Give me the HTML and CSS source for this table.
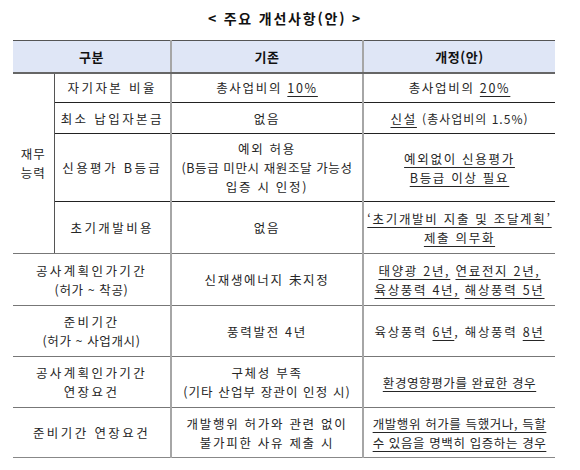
FILE: index.html
```html
<!DOCTYPE html>
<html lang="ko">
<head>
<meta charset="utf-8">
<link rel="stylesheet" href="styles.css">
</head>
<body>
<div class="page">
  <div class="title">&lt; 주요 개선사항(안) &gt;</div>
  <table class="tbl">
    <colgroup>
      <col class="c1"><col class="c2"><col class="c3"><col class="c4">
    </colgroup>
    <thead>
      <tr class="rh">
        <th colspan="2" class="b-mid">구분</th>
        <th class="b-mid">기존</th>
        <th>개정(안)</th>
      </tr>
    </thead>
    <tbody>
      <tr class="r1">
        <td rowspan="4" class="grp">재무<br>능력</td>
        <td class="b-mid lab">자기자본 비율</td>
        <td class="b-mid">총사업비의 <u>10%</u></td>
        <td>총사업비의 <u>20%</u></td>
      </tr>
      <tr class="r2">
        <td class="b-mid lab">최소 납입자본금</td>
        <td class="b-mid">없음</td>
        <td><u>신설</u> <span class="small">(총사업비의 1.5%)</span></td>
      </tr>
      <tr class="r3">
        <td class="b-mid lab">신용평가 B등급</td>
        <td class="b-mid">예외 허용<br><span class="tight">(B등급 미만시 재원조달 가능성</span><br>입증 시 인정)</td>
        <td><u>예외없이 신용평가</u><br><u>B등급 이상 필요</u></td>
      </tr>
      <tr class="r4">
        <td class="b-mid lab">초기개발비용</td>
        <td class="b-mid">없음</td>
        <td><u>‘초기개발비 지출 및 조달계획’</u><br><u>제출 의무화</u></td>
      </tr>
      <tr class="r5 sep">
        <td colspan="2" class="b-mid lab">공사계획인가기간<br><span class="sub">(허가 ~ 착공)</span></td>
        <td class="b-mid">신재생에너지 未지정</td>
        <td><u>태양광 2년,</u> <u>연료전지 2년,</u><br><u>육상풍력 4년,</u> <u>해상풍력 5년</u></td>
      </tr>
      <tr class="r6 sep">
        <td colspan="2" class="b-mid lab">준비기간<br><span class="sub">(허가 ~ 사업개시)</span></td>
        <td class="b-mid">풍력발전 4년</td>
        <td>육상풍력 <u>6년</u>, 해상풍력 <u>8년</u></td>
      </tr>
      <tr class="r7 sep">
        <td colspan="2" class="b-mid lab">공사계획인가기간<br>연장요건</td>
        <td class="b-mid">구체성 부족<br><span class="mid">(기타 산업부 장관이 인정 시)</span></td>
        <td class="tight"><u>환경영향평가를 완료한 경우</u></td>
      </tr>
      <tr class="r8 sep last">
        <td colspan="2" class="b-mid lab">준비기간 연장요건</td>
        <td class="b-mid">개발행위 허가와 관련 없이<br>불가피한 사유 제출 시</td>
        <td class="tight"><u>개발행위 허가를 득했거나, 득할</u><br><u>수 있음을 명백히 입증하는 경우</u></td>
      </tr>
    </tbody>
  </table>
</div>
</body>
</html>
```

FILE: styles.css
```css
html, body {
  margin: 0;
  padding: 0;
  background: #ffffff;
}
.page {
  width: 580px;
  height: 470px;
  font-family: "Noto Sans CJK KR", "Noto Sans", sans-serif;
  color: #262626;
}
.title {
  height: 40px;
  line-height: 37px;
  text-align: center;
  font-size: 14px;
  font-weight: bold;
  letter-spacing: 1.8px;
  padding-right: 10px;
  color: #111;
}
.tbl {
  margin-left: 13px;
  width: 542px;
  table-layout: fixed;
  border-collapse: collapse;
  font-size: 12.5px;
  letter-spacing: 1.7px;
}
.c1 { width: 41px; }
.c2 { width: 117px; }
.c3 { width: 192px; }
.c4 { width: 192px; }
.tbl th, .tbl td {
  padding: 0;
  text-align: center;
  vertical-align: middle;
  line-height: 19px;
  white-space: nowrap;
}
.tbl thead th {
  background: #dfe6f6;
  font-weight: bold;
  font-size: 13px;
  letter-spacing: 0.6px;
  border-top: 1.5px solid #555;
  border-bottom: 2px solid #666;
  color: #111;
}
.rh { height: 32px; }
.b-mid { border-right: 2px solid #a6a6a6; }
.lab { letter-spacing: 2.4px; }
.sub { letter-spacing: 0.6px; }
.grp {
  border-right: 1px solid #555;
  line-height: 20px;
  letter-spacing: 1px;
}
.r1 td:not(.grp), .r2 td, .r3 td { border-bottom: 1px solid #222; }
.r4 td { border-bottom: 1px solid #777; }
.r1 td.grp { border-bottom: 1px solid #777; }
.sep td { border-bottom: 1px solid #777; }
.r1 { height: 30px; }
.r2 { height: 31px; }
.r3 { height: 68px; }
.r4 { height: 52px; }
.r5 { height: 52px; }
.r6 { height: 51px; }
.r7 { height: 51px; }
.r8 { height: 50px; }
.last td { border-bottom: 1.5px solid #888; }
u {
  text-decoration: underline;
  text-underline-offset: 3px;
  text-decoration-thickness: 1px;
}
.small { font-size: 12px; letter-spacing: 1px; }
.tight { letter-spacing: 0.6px; }
.mid { letter-spacing: 1.1px; }
```
